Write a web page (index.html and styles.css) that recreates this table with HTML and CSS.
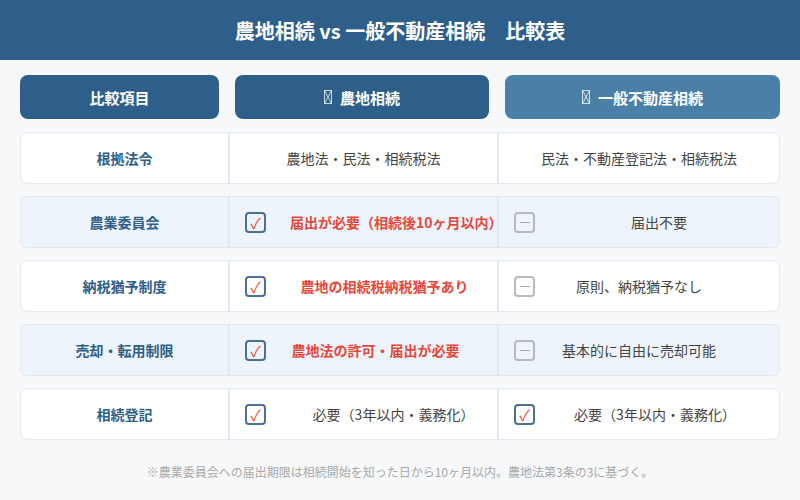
FILE: index.html
```html
<!DOCTYPE html>
<html lang="ja">
<head>
<meta charset="utf-8">
<link rel="stylesheet" href="styles.css">
</head>
<body>
<header class="title-bar">農地相続 vs 一般不動産相続　比較表</header>
<main class="compare">
  <div class="head-row">
    <div class="head head-item">比較項目</div>
    <div class="head head-farm"><svg class="tofu" viewBox="0 0 8 14" width="8" height="14"><rect x="0.5" y="0.5" width="7" height="13"/><path d="M0.5 0.5 L7.5 13.5 M7.5 0.5 L0.5 13.5"/></svg>農地相続</div>
    <div class="head head-general"><svg class="tofu" viewBox="0 0 8 14" width="8" height="14"><rect x="0.5" y="0.5" width="7" height="13"/><path d="M0.5 0.5 L7.5 13.5 M7.5 0.5 L0.5 13.5"/></svg>一般不動産相続</div>
  </div>
  <div class="rows">
    <div class="row">
      <div class="label">根拠法令</div>
      <div class="cell plain"><span class="text">農地法・民法・相続税法</span></div>
      <div class="cell plain"><span class="text">民法・不動産登記法・相続税法</span></div>
    </div>
    <div class="row alt">
      <div class="label">農業委員会</div>
      <div class="cell"><span class="box check">✓</span><span class="text strong">届出が必要（相続後10ヶ月以内）</span></div>
      <div class="cell"><span class="box none"></span><span class="text">届出不要</span></div>
    </div>
    <div class="row">
      <div class="label">納税猶予制度</div>
      <div class="cell"><span class="box check">✓</span><span class="text strong nudge-s">農地の相続税納税猶予あり</span></div>
      <div class="cell"><span class="box none"></span><span class="text nudge-l">原則、納税猶予なし</span></div>
    </div>
    <div class="row alt">
      <div class="label">売却・転用制限</div>
      <div class="cell"><span class="box check">✓</span><span class="text strong nudge-w">農地法の許可・届出が必要</span></div>
      <div class="cell"><span class="box none"></span><span class="text nudge-l">基本的に自由に売却可能</span></div>
    </div>
    <div class="row">
      <div class="label">相続登記</div>
      <div class="cell"><span class="box check">✓</span><span class="text">必要（3年以内・義務化）</span></div>
      <div class="cell"><span class="box check">✓</span><span class="text nudge-m">必要（3年以内・義務化）</span></div>
    </div>
  </div>
  <p class="note">※農業委員会への届出期限は相続開始を知った日から10ヶ月以内。農地法第3条の3に基づく。</p>
</main>
</body>
</html>
```

FILE: styles.css
```css
* { box-sizing: border-box; }
body {
  margin: 0;
  background: #f6f8fa;
  font-family: "Noto Sans CJK JP", "Noto Sans", sans-serif;
  width: 800px;
  height: 500px;
  overflow: hidden;
}
.title-bar {
  height: 60px;
  background: #2e5f8a;
  color: #fff;
  font-size: 20px;
  font-weight: 700;
  display: flex;
  align-items: center;
  justify-content: center;
}
.compare {
  padding: 15px 20px 0;
}
.head-row {
  display: grid;
  grid-template-columns: 199px 254px 275px;
  gap: 16px;
}
.head {
  height: 44px;
  border-radius: 8px;
  color: #fff;
  font-size: 15px;
  font-weight: 700;
  display: flex;
  align-items: center;
  justify-content: center;
}
.head-item, .head-farm { background: #2e5f8a; }
.head-general { background: #4a7fa8; }
.tofu {
  margin-right: 8px;
  fill: none;
  stroke: rgba(255, 255, 255, 0.75);
  stroke-width: 1;
}
.rows {
  margin-top: 13px;
  display: flex;
  flex-direction: column;
  gap: 12px;
}
.row {
  height: 52px;
  display: grid;
  grid-template-columns: 209px 267px 1fr;
  background: #fff;
  border: 1.5px solid #e3e9f0;
  border-radius: 8px;
  overflow: hidden;
}
.row.alt { background: #eef4fb; }
.label {
  display: flex;
  align-items: center;
  justify-content: center;
  color: #2e5f8a;
  font-weight: 700;
  font-size: 14px;
  border-right: 2px solid #e3e9f0;
}
.cell {
  display: flex;
  align-items: center;
  padding-left: 15px;
  font-size: 14px;
  color: #444;
}
.cell + .cell { border-left: 2px solid #e3e9f0; }
.text {
  flex: 1;
  text-align: center;
  padding-left: 20px;
}
.cell + .cell .text { padding-left: 0; }
.cell.plain { padding-left: 0; }
.cell.plain .text { padding-left: 0; }
.text.nudge-s { padding-right: 18px; }
.text.nudge-m { padding-right: 8px; }
.text.nudge-w { padding-right: 36px; }
.text.nudge-l { padding-right: 40px; }
.text.strong {
  color: #e8483a;
  font-weight: 700;
}
.box {
  width: 21px;
  height: 21px;
  border-radius: 4px;
  display: flex;
  align-items: center;
  justify-content: center;
  flex: none;
  margin-right: 4px;
}
.box.check {
  border: 2px solid #4d7191;
  color: #f04a3c;
  font-size: 15px;
  line-height: 1;
}
.box.none {
  border: 2px solid #b9b9b9;
}
.box.none::after {
  content: "";
  width: 10px;
  height: 1px;
  background: #aaa;
}
.note {
  margin: 23px 0 0;
  text-align: center;
  font-size: 12px;
  color: #a8a8a8;
}
```
